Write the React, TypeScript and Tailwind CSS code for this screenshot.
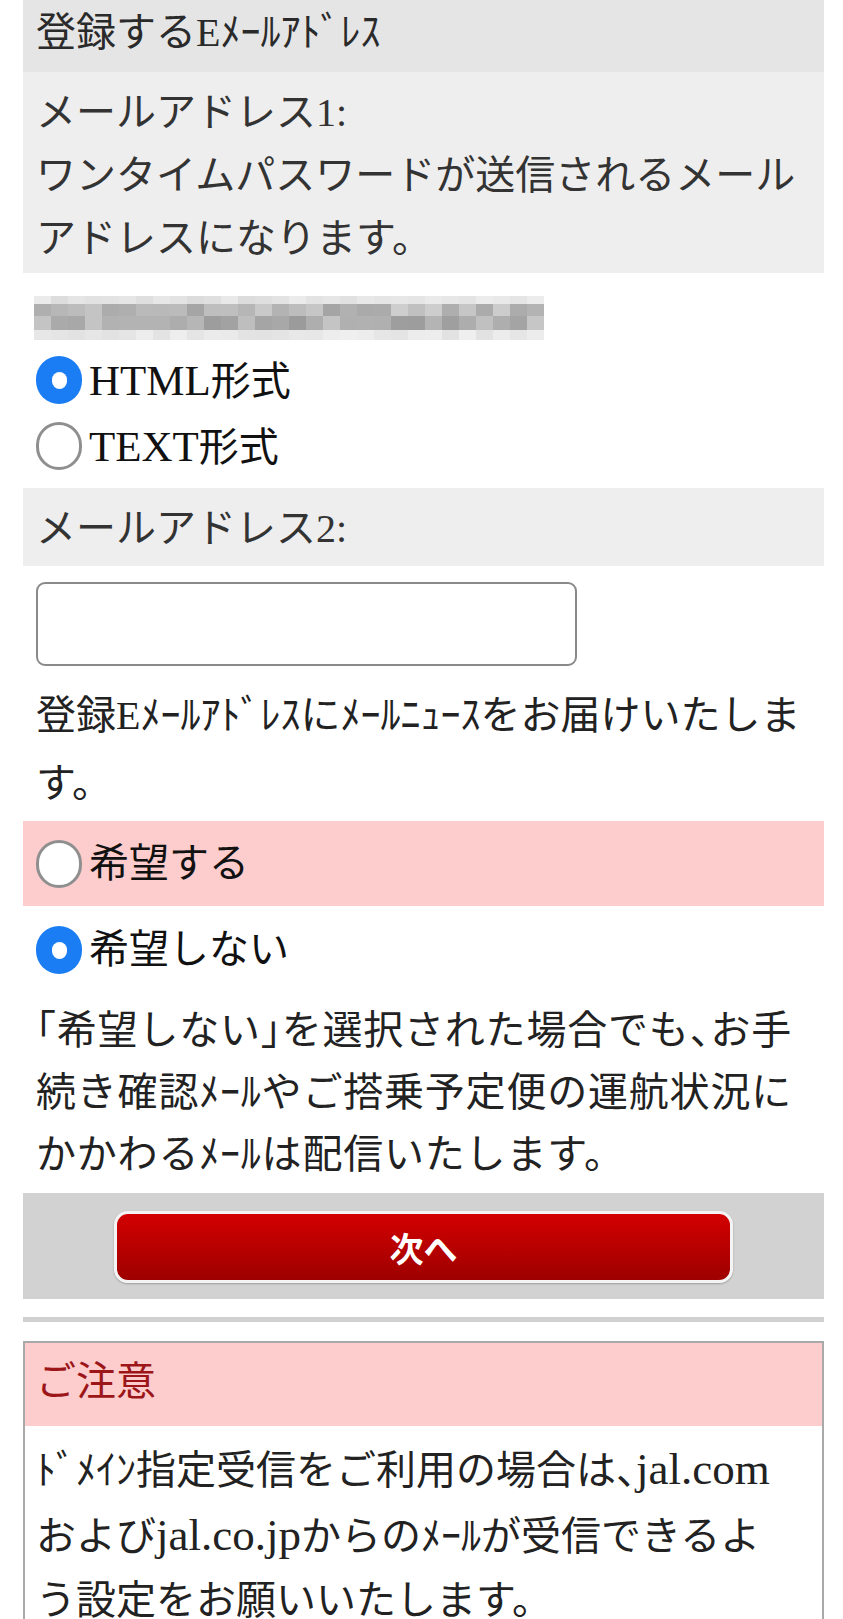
const BLUR_COLS = 30;

// pixelated (mosaic) e-mail address, drawn as blocks
function BlurredEmail() {
  const rows = [
    { y: 0, h: 8, base: 228, spread: 16 },
    { y: 8, h: 12, base: 186, spread: 44 },
    { y: 20, h: 14, base: 176, spread: 46 },
    { y: 34, h: 10, base: 232, spread: 14 },
  ];
  const cells: { x: number; y: number; w: number; h: number; c: string }[] = [];
  rows.forEach((row, ri) => {
    for (let i = 0; i < BLUR_COLS; i++) {
      const n = Math.abs(Math.sin((i + 1) * 12.9898 + ri * 78.233) * 43758.5453) % 1;
      const v = Math.min(245, Math.round(row.base + (n - 0.5) * row.spread));
      cells.push({ x: i * 17, y: row.y, w: 17, h: row.h, c: `rgb(${v},${v},${v})` });
    }
  });
  return (
    <svg className="block" height="44" viewBox="0 0 510 44" width="510">
      {cells.map((cell, idx) => (
        <rect fill={cell.c} height={cell.h} key={idx} width={cell.w} x={cell.x} y={cell.y} />
      ))}
    </svg>
  );
}

// half-width punctuation like 「 」 、
function H({ children }: { children: string }) {
  return <span className="[font-feature-settings:'halt']">{children}</span>;
}

// latin runs are set a little larger than the kana
function L({ children }: { children: string }) {
  return <span className="text-[45px]">{children}</span>;
}

function Radio({ checked }: { checked?: boolean }) {
  if (checked) {
    return (
      <span className="flex h-[48px] w-[46px] shrink-0 items-center justify-center rounded-full bg-[#1a7df4]">
        <span className="h-[17px] w-[15px] rounded-full bg-white" />
      </span>
    );
  }
  return <span className="h-[48px] w-[46px] shrink-0 rounded-full border-[3px] border-[#8f8f8f] bg-white" />;
}

function RadioRow({ checked, children, className = "" }: { checked?: boolean; children: React.ReactNode; className?: string }) {
  return (
    <div className={`flex items-center gap-[7px] px-[13px] ${className}`}>
      <Radio checked={checked} />
      <span className="leading-none text-[#111]">{children}</span>
    </div>
  );
}

export default function App() {
  return (
    <div className="min-h-screen bg-white font-['Liberation_Serif','Noto_Sans_CJK_JP',serif] text-[40px] text-[#222]">
      <div className="ml-[23px] w-[801px]">
        <div className="h-[72px] bg-[#e5e5e5] px-[13px] pt-[2px] leading-[62px] text-[#2a2a2a]">登録するEﾒｰﾙｱﾄﾞﾚｽ</div>

        <div className="h-[201px] bg-[#eeeeee] px-[13px] pt-[9px] leading-[63px] text-[#333]">
          メールアドレス1:
          <br />
          ワンタイムパスワードが送信されるメール
          <br />
          アドレスになります。
        </div>

        <div className="px-[11px] pt-[23px]">
          <BlurredEmail />
        </div>
        <RadioRow checked className="mt-[7px] h-[66px]">
          <span className="text-[43px]">HTML</span>形式
        </RadioRow>
        <RadioRow className="h-[66px]">
          <span className="text-[43px]">TEXT</span>形式
        </RadioRow>

        <div className="mt-[9px] h-[78px] bg-[#eeeeee] px-[13px] pt-[10px] leading-[62px] text-[#333]">メールアドレス2:</div>

        <div className="ml-[13px] mt-[16px] h-[84px] w-[541px] rounded-[9px] border-2 border-[#8a8a8a] bg-white" />

        <p className="mt-[16px] whitespace-nowrap px-[13px] leading-[68px]">
          登録Eﾒｰﾙｱﾄﾞﾚｽにﾒｰﾙﾆｭｰｽをお届けいたしま
          <br />
          す。
        </p>

        <RadioRow className="mt-[3px] h-[85px] bg-[#fdcccc]">希望する</RadioRow>
        <RadioRow checked className="h-[88px]">
          希望しない
        </RadioRow>

        <p className="mt-[6px] whitespace-nowrap px-[13px] leading-[62px] tracking-[0.8px]">
          <H>「</H>希望しない<H>」</H>を選択された場合でも<H>、</H>お手
          <br />
          続き確認ﾒｰﾙやご搭乗予定便の運航状況に
          <br />
          かかわるﾒｰﾙは配信いたします。
        </p>

        <div className="mt-[7px] flex h-[106px] justify-center bg-[#d2d2d2] pt-[18px]">
          <button
            className="flex h-[72px] w-[619px] items-center justify-center rounded-[14px] border-[3px] border-[#f4f4f4] bg-gradient-to-b from-[#d30000] to-[#9e0000] font-['Noto_Sans_CJK_JP',sans-serif] text-[34px] font-bold text-white shadow-[0_1px_2px_rgba(0,0,0,0.25)]"
            type="button"
          >
            次へ
          </button>
        </div>

        <div className="mt-[18px] h-[5px] bg-[#d0d0d0]" />

        <div className="mt-[19px] border-2 border-[#a9a9a9]">
          <div className="h-[83px] bg-[#fdcccc] px-[11px] pt-[8px] leading-[62px] text-[#9c1519]">ご注意</div>
          <p className="whitespace-nowrap px-[11px] pb-[20px] pt-[11px] leading-[64px]">
            ﾄﾞﾒｲﾝ指定受信をご利用の場合は<H>、</H>
            <L>jal.com</L>
            <br />
            および<L>jal.co.jp</L>からのﾒｰﾙが受信できるよ
            <br />
            う設定をお願いいたします。
          </p>
        </div>
      </div>
    </div>
  );
}
